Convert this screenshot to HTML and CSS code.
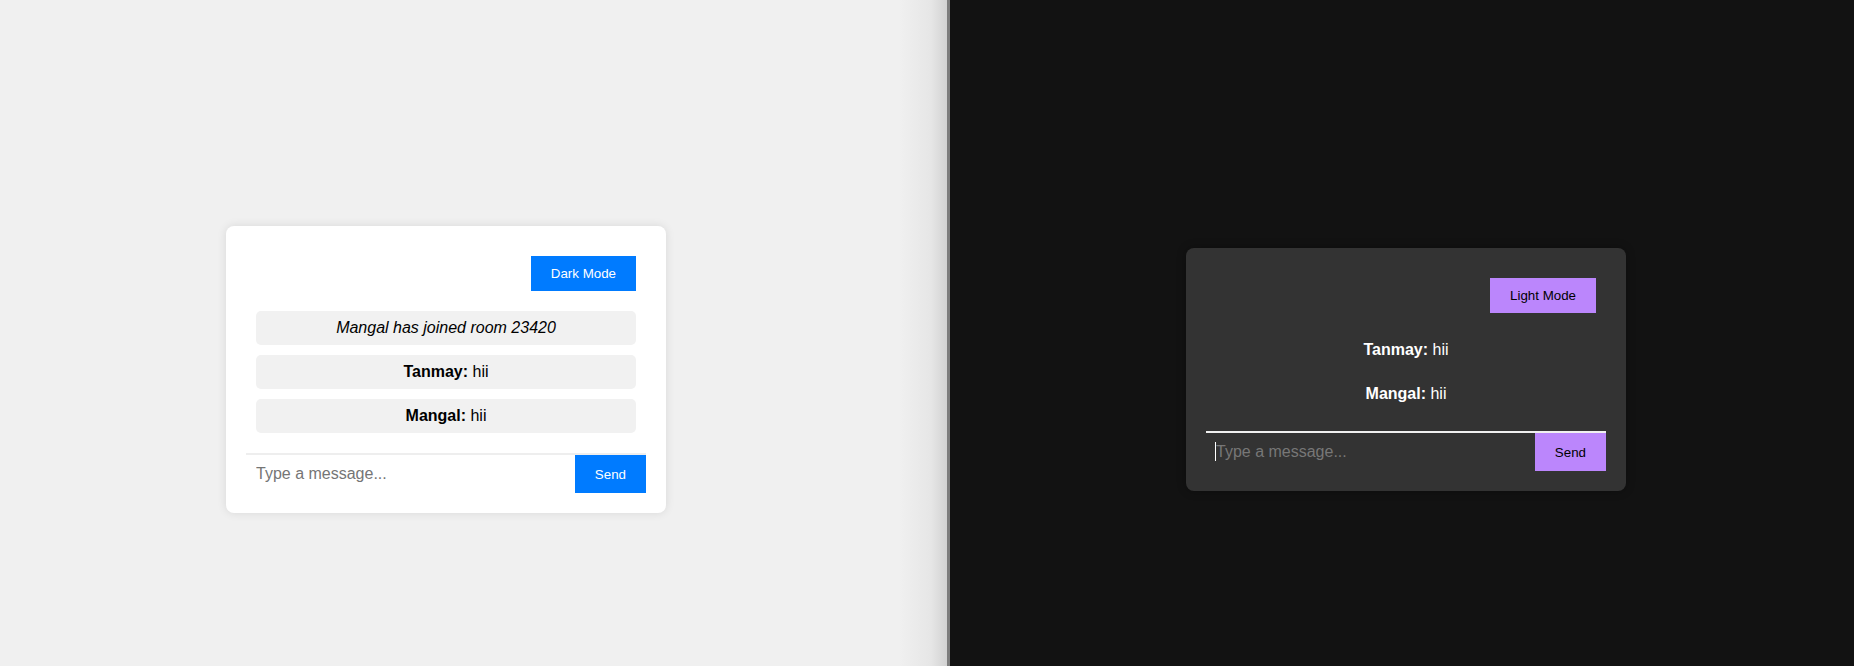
FILE: index.html
```html
<!DOCTYPE html>
<html lang="en">
<head>
<meta charset="utf-8">
<title>Chat</title>
<link rel="stylesheet" href="styles.css">
</head>
<body>
<div class="screen">
  <section class="pane pane-light">
    <div class="card card-light">
      <div class="card-head">
        <button class="mode-btn">Dark Mode</button>
      </div>
      <div class="messages">
        <div class="msg system">Mangal has joined room 23420</div>
        <div class="msg"><b>Tanmay:</b> hii</div>
        <div class="msg"><b>Mangal:</b> hii</div>
      </div>
      <div class="compose">
        <input class="compose-input" type="text" placeholder="Type a message...">
        <button class="send-btn">Send</button>
      </div>
    </div>
  </section>
  <div class="divider"></div>
  <section class="pane pane-dark">
    <div class="card card-dark">
      <div class="card-head">
        <button class="mode-btn">Light Mode</button>
      </div>
      <div class="messages">
        <div class="msg"><b>Tanmay:</b> hii</div>
        <div class="msg"><b>Mangal:</b> hii</div>
      </div>
      <div class="compose">
        <span class="caret"></span>
        <input class="compose-input" type="text" placeholder="Type a message...">
        <button class="send-btn">Send</button>
      </div>
    </div>
  </section>
</div>
</body>
</html>
```

FILE: styles.css
```css
* { box-sizing: border-box; }

html, body {
  margin: 0;
  height: 666px;
  overflow: hidden;
  font-family: "Liberation Sans", Arial, sans-serif;
}

.screen {
  display: grid;
  grid-template-columns: 947px 3px 1fr;
  height: 666px;
}

.pane {
  display: flex;
  justify-content: center;
  align-items: center;
  padding-top: 73px;
}

.pane-light {
  background: linear-gradient(to right, #f0f0f0 0, #f0f0f0 calc(100% - 48px), #e6e6e6 calc(100% - 16px), #d2d2d2 100%);
  padding-right: 55px;
}

.divider {
  background: #7d7d7d;
}

.pane-dark {
  background: #121212;
  padding-left: 8px;
}

.card {
  width: 440px;
  padding: 20px;
  border-radius: 8px;
}

.card-light {
  background: #ffffff;
  color: #000000;
  box-shadow: 0 0 10px rgba(0, 0, 0, 0.1);
}

.card-dark {
  background: #333333;
  color: #ffffff;
  box-shadow: 0 0 10px rgba(0, 0, 0, 0.3);
}

.card-head {
  display: flex;
  justify-content: flex-end;
  margin: 10px 10px 20px;
}

.mode-btn {
  border: none;
  padding: 10px 20px;
  font-family: "Liberation Sans", Arial, sans-serif;
  font-size: 13.333px;
  line-height: 15px;
  cursor: pointer;
}

.card-light .mode-btn { background: #007bff; color: #ffffff; }
.card-dark .mode-btn { background: #bb86fc; color: #000000; }

.messages {
  display: flex;
  flex-direction: column;
  gap: 10px;
  margin: 0 10px;
}

.msg {
  padding: 8px;
  border-radius: 5px;
  text-align: center;
  font-size: 16px;
  line-height: 18px;
}

.card-light .msg { background: #f1f1f1; }
.card-dark .msg { background: transparent; }

.msg.system { font-style: italic; }

.compose {
  position: relative;
  display: flex;
  margin-top: 20px;
}

.card-light .compose { border-top: 2px solid #eeeeee; }
.card-dark .compose { border-top: 2px solid #f0f0f0; }

.caret {
  position: absolute;
  left: 9px;
  top: 9px;
  width: 1px;
  height: 19px;
  background: #ffffff;
}

.compose-input {
  flex: 1;
  min-width: 0;
  border: none;
  outline: none;
  padding: 10px;
  font-family: "Liberation Sans", Arial, sans-serif;
  font-size: 16px;
  line-height: 18px;
  background: transparent;
}

.card-light .compose-input { color: #000000; }
.card-light .compose-input::placeholder { color: #757575; }
.card-dark .compose-input { color: #ffffff; caret-color: #ffffff; }
.card-dark .compose-input::placeholder { color: #777777; }

.send-btn {
  border: none;
  padding: 0 20px;
  font-family: "Liberation Sans", Arial, sans-serif;
  font-size: 13.333px;
  cursor: pointer;
}

.card-light .send-btn { background: #007bff; color: #ffffff; }
.card-dark .send-btn { background: #bb86fc; color: #000000; }
```
